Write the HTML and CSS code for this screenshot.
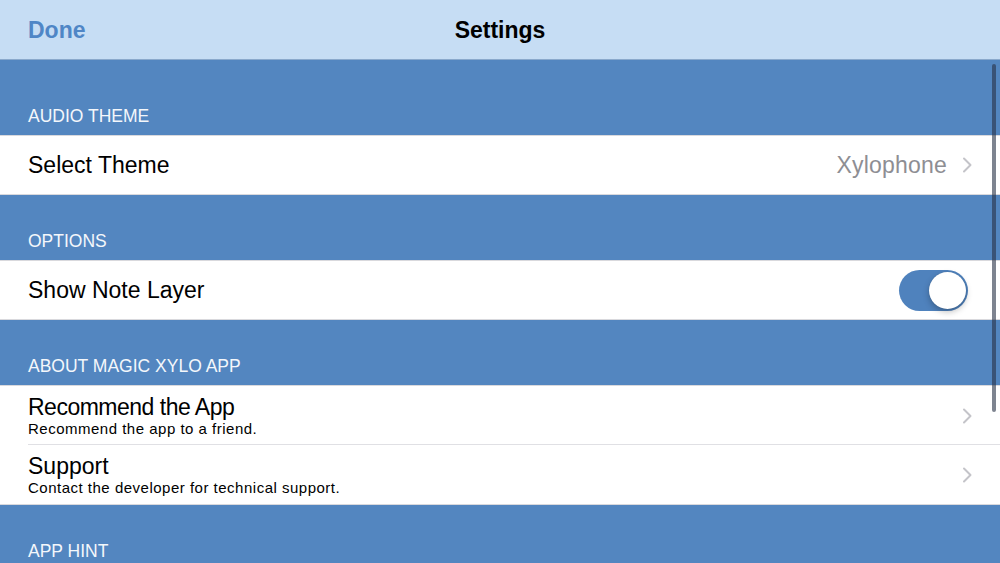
FILE: index.html
```html
<!DOCTYPE html>
<html>
<head>
<meta charset="utf-8">
<link rel="stylesheet" href="styles.css">
</head>
<body>
<div class="app">
  <header class="navbar">
    <span class="nav-done">Done</span>
    <span class="nav-title">Settings</span>
  </header>
  <main class="content">
    <div class="section-header first">AUDIO THEME</div>
    <div class="row">
      <span class="row-title">Select Theme</span>
      <span class="row-value">Xylophone</span>
      <svg class="chevron" viewBox="0 0 10 16"><path d="M2 1.5 L8.5 8 L2 14.5" /></svg>
    </div>
    <div class="section-header">OPTIONS</div>
    <div class="row">
      <span class="row-title">Show Note Layer</span>
      <div class="toggle"><div class="knob"></div></div>
    </div>
    <div class="section-header">ABOUT MAGIC XYLO APP</div>
    <div class="row inset">
      <div class="row-text">
        <span class="row-title tight">Recommend the App</span>
        <span class="row-sub">Recommend the app to a friend.</span>
      </div>
      <svg class="chevron" viewBox="0 0 10 16"><path d="M2 1.5 L8.5 8 L2 14.5" /></svg>
    </div>
    <div class="row">
      <div class="row-text">
        <span class="row-title">Support</span>
        <span class="row-sub">Contact the developer for technical support.</span>
      </div>
      <svg class="chevron" viewBox="0 0 10 16"><path d="M2 1.5 L8.5 8 L2 14.5" /></svg>
    </div>
    <div class="section-header">APP HINT</div>
  </main>
  <div class="scrollbar"></div>
</div>
</body>
</html>
```

FILE: styles.css
```css
* { box-sizing: border-box; }
html, body {
  margin: 0;
  padding: 0;
  width: 1000px;
  height: 563px;
  overflow: hidden;
  font-family: "Liberation Sans", Arial, sans-serif;
}
.app {
  position: relative;
  width: 1000px;
  height: 563px;
  background: #5386c0;
  overflow: hidden;
}
.navbar {
  position: relative;
  height: 60px;
  background: #c6ddf4;
  border-bottom: 1px solid #8aa9cc;
  display: flex;
  align-items: center;
  padding: 0 28px;
}
.nav-done {
  font-size: 23px;
  font-weight: bold;
  color: #4f86c6;
  padding-top: 2px;
}
.nav-title {
  position: absolute;
  left: 0;
  right: 0;
  text-align: center;
  font-size: 23px;
  font-weight: bold;
  color: #000;
  padding-top: 2px;
  pointer-events: none;
}
.content {
  display: flex;
  flex-direction: column;
}
.section-header {
  height: 65px;
  display: flex;
  align-items: flex-end;
  padding: 0 28px 10px;
  color: #f4f7fb;
  font-size: 17.5px;
  line-height: 18px;
}
.section-header.first {
  height: 75px;
}
.row {
  height: 60px;
  background: #fff;
  display: flex;
  align-items: center;
  padding: 0 28px;
  border-top: 1px solid #d9d9dd;
  border-bottom: 1px solid #d9d9dd;
  position: relative;
}
.row.inset {
  border-bottom: none;
}
.row.inset::after {
  content: "";
  position: absolute;
  left: 28px;
  right: 0;
  bottom: 0;
  height: 1px;
  background: #e0e0e4;
}
.row.inset + .row {
  border-top: none;
}
.row-title {
  font-size: 23px;
  color: #000;
  flex: 1;
}
.row-title.tight {
  letter-spacing: -0.5px;
}
.row-value {
  font-size: 23px;
  color: #8e8e93;
  margin-right: 15px;
  letter-spacing: 0.2px;
}
.row-text {
  flex: 1;
  display: flex;
  flex-direction: column;
  padding-top: 1px;
}
.row-text .row-title {
  line-height: 25px;
}
.row-sub {
  font-size: 15px;
  line-height: 18px;
  letter-spacing: 0.5px;
  color: #000;
}
.chevron {
  width: 10px;
  height: 16px;
  fill: none;
  stroke: #c4c4c9;
  stroke-width: 2;
  stroke-linecap: round;
  stroke-linejoin: round;
}
.toggle {
  width: 69px;
  height: 41px;
  border-radius: 21px;
  background: #4f82bd;
  position: relative;
  margin-right: 4px;
}
.knob {
  position: absolute;
  right: 2px;
  top: 2px;
  width: 37px;
  height: 37px;
  border-radius: 50%;
  background: #fff;
  box-shadow: 0 3px 6px rgba(0,0,0,0.25), 0 0 1px rgba(0,0,0,0.2);
}
.scrollbar {
  position: absolute;
  left: 992px;
  top: 64px;
  width: 4px;
  height: 348px;
  border-radius: 2px;
  background: rgba(40, 50, 70, 0.6);
}
```
